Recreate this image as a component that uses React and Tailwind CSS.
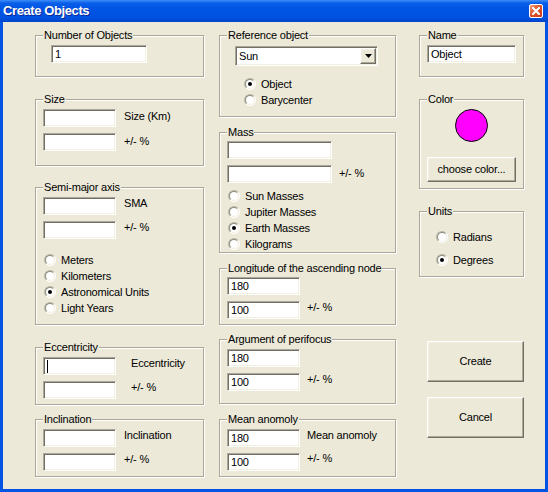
import clsx from "clsx";

const sunken =
  "border border-t-[#aca899] border-l-[#aca899] border-b-white border-r-white shadow-[inset_1px_1px_0_#716f64,inset_-1px_-1px_0_#f1efe2]";
const raised =
  "border border-t-white border-l-white border-b-[#716f64] border-r-[#716f64] shadow-[inset_-1px_-1px_0_#aca899,inset_1px_1px_0_#f1efe2]";

function Group({ label, className, children }) {
  return (
    <div
      className={clsx(
        "relative border border-[#aca899] shadow-[1px_1px_0_#fff,inset_1px_1px_0_#fff]",
        className
      )}
    >
      <span className="absolute left-[7px] top-[-7px] bg-[#ece9d8] px-[1px] leading-[13px] whitespace-nowrap">
        {label}
      </span>
      {children}
    </div>
  );
}

function Edit({ className, value, caret }) {
  return (
    <div className={clsx("h-[18px] bg-white flex items-center pl-[3px]", sunken, className)}>
      {caret && <div className="w-[1px] h-[13px] bg-black" />}
      {value}
    </div>
  );
}

function Field({ width = "w-[73px]", value, label, gap = "ml-[8px]", top = "mt-[0px]", className }) {
  return (
    <div className={clsx("flex items-start", className)}>
      <Edit className={width} value={value} />
      {label && <span className={clsx("leading-[13px] whitespace-nowrap", gap, top)}>{label}</span>}
    </div>
  );
}

function Radio({ label, checked, className }) {
  return (
    <div className={clsx("flex items-center h-[16px]", className)}>
      <div className="w-[12px] h-[12px] rounded-full border border-[#b9b6a8] border-b-white border-r-white">
        <div className="w-full h-full rounded-full border border-[#8a877c] border-b-[#f1efe2] border-r-[#f1efe2] bg-white flex items-center justify-center">
          {checked && <div className="w-[4px] h-[4px] rounded-full bg-black" />}
        </div>
      </div>
      <span className="ml-[5px] leading-[13px] whitespace-nowrap">{label}</span>
    </div>
  );
}

export default function App() {
  return (
    <div className="w-[548px] h-[492px] bg-[#0054e3] flex flex-col text-black text-[11px] tracking-[-0.2px] font-['Liberation_Sans',Arial,sans-serif]">
      {/* title bar */}
      <div className="h-[22px] shrink-0 flex items-center justify-between bg-[linear-gradient(180deg,#3d8ef7_0%,#0a5fe8_14%,#0055e5_35%,#0052e0_80%,#0044cc_100%)]">
        <span className="pl-[3px] text-white font-bold text-[13px] tracking-[-0.4px] [text-shadow:1px_1px_#0a2a9a]">
          Create Objects
        </span>
        <div className="mr-[5px] w-[14px] h-[14px] rounded-[2px] border border-white bg-[linear-gradient(135deg,#f0a080_0%,#e0562c_45%,#c83c18_100%)] flex items-center justify-center">
          <svg width="8" height="8" viewBox="0 0 8 8">
            <path d="M1 1 L7 7 M7 1 L1 7" stroke="#fff" strokeWidth="2" strokeLinecap="square" />
          </svg>
        </div>
      </div>

      {/* client area */}
      <div className="flex-1 mx-[3px] mb-[3px] bg-[#ece9d8] flex pl-[32px] pt-[13px]">
        {/* left column */}
        <div className="w-[169px] flex flex-col">
          <Group label="Number of Objects" className="h-[42px] pl-[15px] pt-[9px]">
            <Edit className="w-[96px]" value="1" />
          </Group>

          <Group label="Size" className="mt-[22px] h-[67px] pl-[7px] pt-[9px]">
            <Field label="Size (Km)" top="mt-[1px]" />
            <Field label="+/- %" top="mt-[2px]" className="mt-[6px]" />
          </Group>

          <Group label="Semi-major axis" className="mt-[21px] h-[138px] pl-[7px] pt-[9px]">
            <Field label="SMA" />
            <Field label="+/- %" className="mt-[6px]" />
            <div className="mt-[13px] pl-[1px]">
              <Radio label="Meters" />
              <Radio label="Kilometers" />
              <Radio label="Astronomical Units" checked />
              <Radio label="Light Years" />
            </div>
          </Group>

          <Group label="Eccentricity" className="mt-[22px] h-[58px] pl-[7px] pt-[9px]">
            <div className="flex items-start">
              <Edit className="w-[73px]" caret />
              <span className="ml-[15px] leading-[13px]">Eccentricity</span>
            </div>
            <Field label="+/- %" gap="ml-[15px]" className="mt-[6px]" />
          </Group>

          <Group label="Inclination" className="mt-[14px] h-[58px] pl-[7px] pt-[9px]">
            <Field label="Inclination" />
            <Field label="+/- %" className="mt-[6px]" />
          </Group>
        </div>

        {/* middle column */}
        <div className="w-[177px] ml-[15px] flex flex-col">
          <Group label="Reference object" className="h-[82px] pl-[15px] pt-[10px]">
            <div className={clsx("w-[143px] h-[20px] bg-white flex items-center justify-between pl-[3px] pr-[1px]", sunken)}>
              <span>Sun</span>
              <div className={clsx("w-[16px] h-[16px] bg-[#ece9d8] flex items-center justify-center", raised)}>
                <svg width="7" height="4" viewBox="0 0 7 4">
                  <path d="M0 0 H7 L3.5 4 Z" fill="#000" />
                </svg>
              </div>
            </div>
            <div className="mt-[10px] pl-[9px]">
              <Radio label="Object" checked />
              <Radio label="Barycenter" />
            </div>
          </Group>

          <Group label="Mass" className="mt-[15px] h-[121px] pl-[7px] pt-[8px]">
            <Edit className="w-[105px]" />
            <Field width="w-[105px]" label="+/- %" gap="ml-[7px]" top="mt-[2px]" className="mt-[6px]" />
            <div className="mt-[5px] pl-[1px]">
              <Radio label="Sun Masses" />
              <Radio label="Jupiter Masses" />
              <Radio label="Earth Masses" checked />
              <Radio label="Kilograms" />
            </div>
          </Group>

          <Group label="Longitude of the ascending node" className="mt-[15px] h-[57px] pl-[7px] pt-[8px]">
            <Edit className="w-[73px]" value="180" />
            <Field value="100" label="+/- %" gap="ml-[7px]" className="mt-[6px]" />
          </Group>

          <Group label="Argument of perifocus" className="mt-[14px] h-[65px] pl-[7px] pt-[9px]">
            <Edit className="w-[73px]" value="180" />
            <Field value="100" label="+/- %" gap="ml-[7px]" className="mt-[6px]" />
          </Group>

          <Group label="Mean anomoly" className="mt-[15px] h-[58px] pl-[7px] pt-[9px]">
            <Field value="180" label="Mean anomoly" gap="ml-[7px]" />
            <Field value="100" label="+/- %" gap="ml-[7px]" top="mt-[-1px]" className="mt-[6px]" />
          </Group>
        </div>

        {/* right column */}
        <div className="w-[105px] ml-[23px] flex flex-col">
          <Group label="Name" className="h-[42px] pl-[7px] pt-[9px]">
            <Edit className="w-[89px]" value="Object" />
          </Group>

          <Group label="Color" className="mt-[22px] h-[90px] pt-[9px] flex flex-col">
            <div className="mx-auto w-[33px] h-[33px] rounded-full bg-[#ff00ff] border border-black" />
            <div className={clsx("mt-[15px] ml-[7px] w-[89px] h-[25px] bg-[#ece9d8] flex items-center justify-center", raised)}>
              choose color...
            </div>
          </Group>

          <Group label="Units" className="mt-[22px] h-[66px] pl-[16px] pt-[17px]">
            <Radio label="Radians" />
            <Radio label="Degrees" checked className="mt-[7px]" />
          </Group>

          <div className={clsx("mt-[64px] ml-[8px] w-[97px] h-[41px] flex items-center justify-center", raised)}>
            Create
          </div>
          <div className={clsx("mt-[15px] ml-[8px] w-[97px] h-[41px] flex items-center justify-center", raised)}>
            Cancel
          </div>
        </div>
      </div>
    </div>
  );
}
